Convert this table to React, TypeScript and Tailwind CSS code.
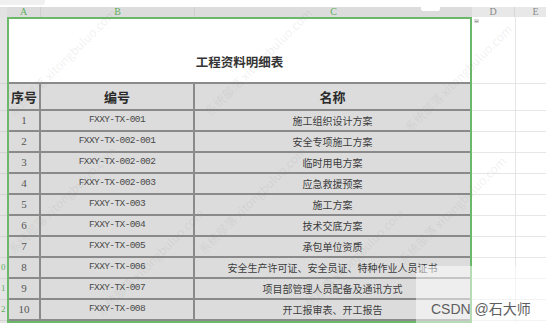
import React from "react";

const rows: [string, string, string][] = [
  ["1", "FXXY-TX-001", "施工组织设计方案"],
  ["2", "FXXY-TX-002-001", "安全专项施工方案"],
  ["3", "FXXY-TX-002-002", "临时用电方案"],
  ["4", "FXXY-TX-002-003", "应急救援预案"],
  ["5", "FXXY-TX-003", "施工方案"],
  ["6", "FXXY-TX-004", "技术交底方案"],
  ["7", "FXXY-TX-005", "承包单位资质"],
  ["8", "FXXY-TX-006", "安全生产许可证、安全员证、特种作业人员证书"],
  ["9", "FXXY-TX-007", "项目部管理人员配备及通讯方式"],
  ["10", "FXXY-TX-008", "开工报审表、开工报告"],
];

// only the last digit of rows 10, 11, 12 shows in the narrow row-header strip
const rowDigits = ["", "", "", "", "", "", "", "0", "1", "2"];

const marks: [number, number][] = [
  [62, 62],
  [258, 62],
  [458, 78],
  [62, 200],
  [252, 200],
  [452, 210],
  [150, 262],
  [350, 262],
];

export default function App() {
  return (
    <div
      className="relative w-[546px] h-[327px] overflow-hidden bg-white"
      style={{ fontFamily: '"Noto Sans CJK SC", "Noto Sans", sans-serif' }}
    >
      {/* top strip */}
      <div className="h-[7px] flex">
        <div className="w-[45px] h-[5px] bg-[#f0f0f0] rounded-br-[3px]" />
      </div>

      {/* column header bar */}
      <div
        className="relative flex h-[10px] text-[10px] leading-[10px]"
        style={{ fontFamily: '"Liberation Serif", serif' }}
      >
        <div className="w-[7px] bg-[#e2e2e2]" />
        <div className="w-[34px] bg-[#dcdcdc] text-[#5fae5f] text-center border-r border-[#cfcfcf]">A</div>
        <div className="w-[154px] bg-[#dcdcdc] text-[#5fae5f] text-center border-r border-[#cfcfcf]">B</div>
        <div className="w-[277px] bg-[#dcdcdc] text-[#5fae5f] text-center">C</div>
        <div className="w-[43px] bg-[#e8e8e8] text-[#8a8a8a] text-center border-r border-[#d6d6d6]">D</div>
        <div className="flex-1 bg-[#e8e8e8] text-[#8a8a8a] text-center pl-[10px]">E</div>
        <div className="absolute left-[421px] top-0 w-[19px] h-[4px] bg-white rounded-b-[2px]" />
      </div>

      {/* body */}
      <div className="flex">
        {/* row headers */}
        <div
          className="w-[7px] flex flex-col bg-[#e4e4e4] text-[9px] text-[#5fae5f]"
          style={{ fontFamily: '"Liberation Serif", serif' }}
        >
          <div className="h-[67px] border-b border-[#d4d4d4]" />
          <div className="h-[27px] border-b border-[#d4d4d4]" />
          {rowDigits.map((d, i) => (
            <div
              key={i}
              className="h-[21px] flex items-center justify-start pl-[1px] border-b border-[#d4d4d4]"
            >
              {d}
            </div>
          ))}
        </div>

        {/* selected table */}
        <div className="w-[465px] border-2 border-[#6bb86b] bg-[#dcdcdc]">
          <div className="h-[65px] bg-white border-b-2 border-[#8a8a8a] pt-[36px] text-center text-[12.5px] leading-[14px] font-bold text-[#333]">
            工程资料明细表
          </div>
          <div className="grid grid-cols-[32px_154px_1fr] h-[27px] border-b-2 border-[#8a8a8a] text-[13px] font-bold text-[#2a2a2a]">
            <div className="flex items-center justify-center border-r-2 border-[#8a8a8a]">序号</div>
            <div className="flex items-center justify-center border-r-2 border-[#8a8a8a]">编号</div>
            <div className="flex items-center justify-center">名称</div>
          </div>
          {rows.map(([n, code, name], i) => (
            <div
              key={i}
              className="grid grid-cols-[32px_154px_1fr] h-[21px] border-b-2 border-[#8a8a8a]"
            >
              <div
                className="flex items-center justify-center border-r-2 border-[#8a8a8a] text-[11px] text-[#555]"
                style={{ fontFamily: '"Liberation Serif", serif' }}
              >
                {n}
              </div>
              <div
                className="flex items-center justify-center border-r-2 border-[#8a8a8a] text-[9.5px] tracking-[-0.6px] text-[#4a4a4a]"
                style={{ fontFamily: '"Liberation Mono", monospace' }}
              >
                {code}
              </div>
              <div className="flex items-center justify-center text-[10px] text-[#3c3c3c] whitespace-nowrap">
                {name}
              </div>
            </div>
          ))}
        </div>

        {/* columns D/E */}
        <div className="relative flex-1 flex flex-col">
          <div className="h-[67px] border-b border-[#e6e6e6]" />
          <div className="h-[27px] border-b border-[#e6e6e6]" />
          {rows.map((_, i) => (
            <div key={i} className="h-[21px] border-b border-[#e6e6e6]" />
          ))}
          <div className="absolute left-[43px] top-0 bottom-0 w-px bg-[#e6e6e6]" />
          <div className="absolute left-[2px] top-[2px] w-[5px] h-[4px] bg-[#dadada] flex items-center justify-center">
            <div className="w-[3px] h-px bg-[#999]" />
          </div>
        </div>
      </div>

      {/* watermark */}
      <div className="pointer-events-none absolute inset-0">
        {marks.map(([x, y], i) => (
          <div
            key={i}
            className="absolute whitespace-nowrap text-[12px] leading-[14px] text-[rgba(130,130,130,0.13)]"
            style={{ left: x - 75, top: y - 7, width: 150, textAlign: "center", transform: "rotate(-45deg)" }}
          >
            系统部落 xitongbuluo.com
          </div>
        ))}
      </div>

      {/* CSDN badge */}
      <div className="pointer-events-none absolute left-[416px] top-[266px] w-[130px] h-[61px] bg-white/50 rounded-tl-[8px]" />
      <div
        className="pointer-events-none absolute left-[431px] top-[300px] text-[14px] leading-[18px] text-[#5e5e5e] whitespace-nowrap"
        style={{ fontFamily: '"Liberation Sans", "Noto Sans CJK SC", sans-serif' }}
      >
        CSDN @石大师
      </div>
    </div>
  );
}
